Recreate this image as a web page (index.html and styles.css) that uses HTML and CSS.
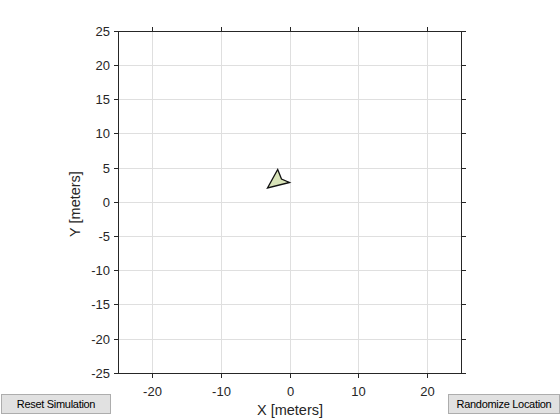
FILE: index.html
```html
<!DOCTYPE html>
<html>
<head>
<title>Simulation</title>
<meta charset="UTF-8">
<link rel="stylesheet" href="styles.css">
</head>
<body>
<div class="figure">
	<svg class="plot" width="560" height="420" viewBox="0 0 560 420">
		<!-- grid -->
		<g class="grid">
			<line x1="152.5" y1="31" x2="152.5" y2="373"/>
			<line x1="221.5" y1="31" x2="221.5" y2="373"/>
			<line x1="290.5" y1="31" x2="290.5" y2="373"/>
			<line x1="358.5" y1="31" x2="358.5" y2="373"/>
			<line x1="427.5" y1="31" x2="427.5" y2="373"/>
			<line x1="118" y1="65.5" x2="461" y2="65.5"/>
			<line x1="118" y1="99.5" x2="461" y2="99.5"/>
			<line x1="118" y1="133.5" x2="461" y2="133.5"/>
			<line x1="118" y1="168.5" x2="461" y2="168.5"/>
			<line x1="118" y1="202.5" x2="461" y2="202.5"/>
			<line x1="118" y1="236.5" x2="461" y2="236.5"/>
			<line x1="118" y1="270.5" x2="461" y2="270.5"/>
			<line x1="118" y1="304.5" x2="461" y2="304.5"/>
			<line x1="118" y1="339.5" x2="461" y2="339.5"/>
		</g>
		<!-- robot -->
		<polygon class="robot" points="277.7,169.5 281.5,179 289.5,182.5 267.5,188"/>
		<!-- box and ticks -->
		<g class="axis">
			<rect x="118.5" y="31.5" width="343" height="342"/>
			<path d="M152.5 31v-4M221.5 31v-4M290.5 31v-4M358.5 31v-4M427.5 31v-4
				M152.5 374v4M221.5 374v4M290.5 374v4M358.5 374v4M427.5 374v4
				M118 31.5h-4M118 65.5h-4M118 99.5h-4M118 133.5h-4M118 168.5h-4M118 202.5h-4M118 236.5h-4M118 270.5h-4M118 304.5h-4M118 339.5h-4M118 373.5h-4
				M462 31.5h4M462 65.5h4M462 99.5h4M462 133.5h4M462 168.5h4M462 202.5h4M462 236.5h4M462 270.5h4M462 304.5h4M462 339.5h4M462 373.5h4"/>
		</g>
		<g class="yticks">
			<text x="110" y="36">25</text>
			<text x="110" y="70">20</text>
			<text x="110" y="104">15</text>
			<text x="110" y="138">10</text>
			<text x="110" y="173">5</text>
			<text x="110" y="207">0</text>
			<text x="110" y="241">-5</text>
			<text x="110" y="275">-10</text>
			<text x="110" y="309">-15</text>
			<text x="110" y="344">-20</text>
			<text x="110" y="378">-25</text>
		</g>
		<g class="xticks">
			<text x="152.5" y="396">-20</text>
			<text x="221.5" y="396">-10</text>
			<text x="290.5" y="396">0</text>
			<text x="358.5" y="396">10</text>
			<text x="427.5" y="396">20</text>
		</g>
		<text class="label" x="290" y="415">X [meters]</text>
		<text class="label" transform="translate(80,204) rotate(-90)">Y [meters]</text>
	</svg>
	<div class="controls">
		<button>Reset Simulation</button>
		<button class="wide">Randomize Location</button>
	</div>
</div>
</body>
</html>
```
FILE: styles.css
```css
body{margin:0;background-color:#FFF;font-family:"Liberation Sans",Arial,sans-serif;}
.figure{display:grid;width:560px;height:420px;overflow:hidden;}
.plot,.controls{grid-area:1/1;}
.plot{display:block;}
.grid line{stroke:#DFDFDF;stroke-width:1;}
.axis rect{fill:none;stroke:#262626;stroke-width:1;}
.axis path{fill:none;stroke:#262626;stroke-width:1;}
.robot{fill:#D9E4B9;stroke:#111;stroke-width:1.3;stroke-linejoin:miter;}
.yticks text{font-size:13px;fill:#262626;text-anchor:end;}
.xticks text{font-size:13px;fill:#262626;text-anchor:middle;}
.label{font-size:14.5px;fill:#262626;text-anchor:middle;}
.controls{align-self:end;display:flex;justify-content:space-between;padding:0 0 6px 1px;}
.controls button{width:110px;height:20px;margin:0;padding:0;font-family:"Liberation Sans",Arial,sans-serif;font-size:11px;letter-spacing:-0.3px;color:#000;background-color:#E1E1E1;border:1px solid #ADADAD;border-radius:0;}
.controls button.wide{width:112px;}
```
